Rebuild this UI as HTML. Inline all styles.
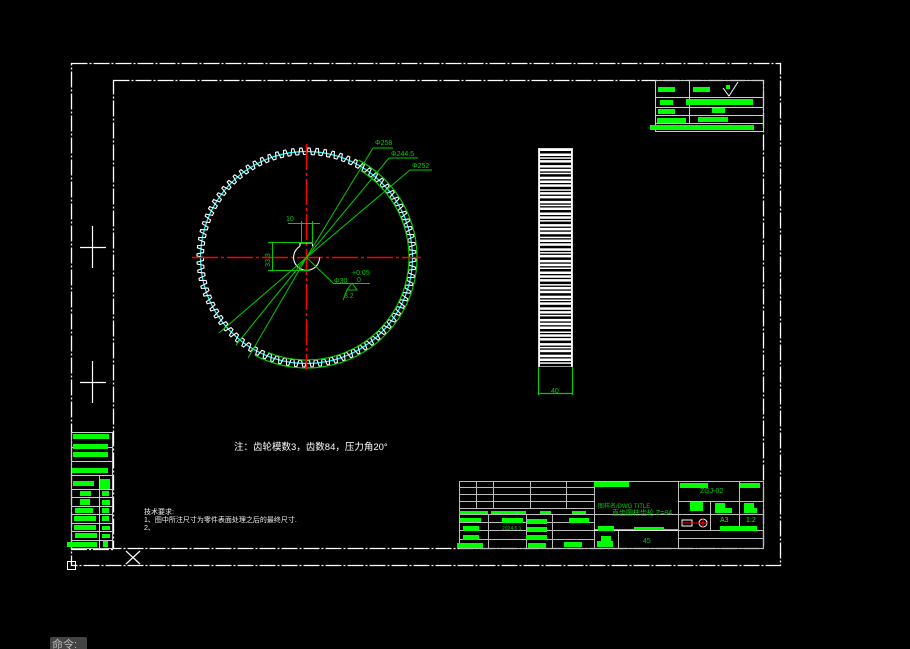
<!DOCTYPE html>
<html><head><meta charset="utf-8"><style>
html,body{margin:0;padding:0;background:#000;width:910px;height:649px;overflow:hidden}
svg{display:block}
text{font-family:"Liberation Sans","Noto Sans CJK SC",sans-serif}
</style></head><body>
<svg id="s" width="910" height="649" viewBox="0 0 910 649" xmlns="http://www.w3.org/2000/svg">
<g fill="none" stroke="#fff" stroke-width="1.3" stroke-dasharray="16 2 2 2">
<rect x="71.5" y="63.5" width="709" height="502"/>
<rect x="113.5" y="80.5" width="650" height="468"/>
<line x1="71" y1="549.5" x2="113" y2="549.5"/>
</g>
<g stroke="#fff" stroke-width="1.2">
<line x1="80" y1="247.5" x2="106" y2="247.5"/><line x1="92.5" y1="226" x2="92.5" y2="268"/>
<line x1="80" y1="382.5" x2="106" y2="382.5"/><line x1="92.5" y1="361" x2="92.5" y2="403"/>
<line x1="126" y1="551" x2="140" y2="564"/><line x1="140" y1="551" x2="126" y2="564"/>
</g>
<rect x="67.5" y="561.5" width="8" height="8" fill="none" stroke="#fff"/>
<g fill="none" stroke="#ccc" stroke-width="1">
<rect x="71.5" y="432.5" width="41" height="116"/>
<line x1="71" y1="447.5" x2="113" y2="447.5"/><line x1="71" y1="461.5" x2="113" y2="461.5"/><line x1="71" y1="475.5" x2="113" y2="475.5"/>
<line x1="99.5" y1="476" x2="99.5" y2="549"/>
<line x1="72" y1="489.5" x2="113" y2="489.5"/><line x1="72" y1="497.5" x2="113" y2="497.5"/><line x1="72" y1="506.5" x2="113" y2="506.5"/><line x1="72" y1="514.5" x2="113" y2="514.5"/><line x1="72" y1="523.5" x2="113" y2="523.5"/><line x1="72" y1="531.5" x2="113" y2="531.5"/><line x1="72" y1="540.5" x2="113" y2="540.5"/>
</g>
<g fill="#0f0">
<rect x="73" y="434" width="36" height="5"/><rect x="73" y="444" width="35" height="5"/><rect x="73" y="452" width="35" height="5"/><rect x="72" y="468" width="36" height="5"/>
<rect x="73" y="481" width="21" height="5"/><rect x="100" y="479" width="10" height="10"/>
<rect x="80" y="491" width="11" height="5"/><rect x="102" y="491" width="7" height="5"/>
<rect x="80" y="499" width="10" height="6"/><rect x="102" y="500" width="8" height="5"/>
<rect x="75" y="508" width="18" height="5"/><rect x="102" y="508" width="7" height="5"/>
<rect x="74" y="516" width="22" height="5"/><rect x="102" y="516" width="7" height="5"/>
<rect x="74" y="525" width="22" height="5"/><rect x="102" y="526" width="8" height="4"/>
<rect x="75" y="533" width="22" height="5"/><rect x="102" y="534" width="8" height="4"/>
<rect x="67" y="542" width="30" height="5"/><rect x="103" y="541" width="5" height="6"/>
</g>
<g fill="none" stroke="#ccc">
<rect x="655.5" y="80.5" width="108" height="51"/>
<line x1="655" y1="97.5" x2="764" y2="97.5"/><line x1="655" y1="107.5" x2="764" y2="107.5"/><line x1="655" y1="115.5" x2="764" y2="115.5"/><line x1="655" y1="123.5" x2="764" y2="123.5"/>
<line x1="689.5" y1="80" x2="689.5" y2="124"/>
</g>
<g fill="#0f0">
<rect x="658" y="87" width="17" height="5"/><rect x="693" y="87" width="17" height="5"/><rect x="726" y="85" width="4" height="4"/>
<rect x="660" y="100" width="13" height="5"/><rect x="686" y="99" width="67" height="6"/>
<rect x="658" y="109" width="17" height="5"/><rect x="712" y="108" width="13" height="5"/>
<rect x="657" y="118" width="29" height="5"/><rect x="698" y="117" width="30" height="5"/>
<rect x="650" y="125" width="104" height="5"/>
</g>
<path d="M723 88 L729 96 L738 82" fill="none" stroke="#fff" stroke-width="1"/>
<g fill="none" stroke="#bbb" stroke-width="1">
<rect x="459.5" y="481.5" width="304" height="67"/>
<line x1="459" y1="487.5" x2="594" y2="487.5"/><line x1="459" y1="494.5" x2="594" y2="494.5"/><line x1="459" y1="501.5" x2="594" y2="501.5"/><line x1="459" y1="508.5" x2="594" y2="508.5"/><line x1="459" y1="514.5" x2="764" y2="514.5"/>
<line x1="459" y1="522.5" x2="594" y2="522.5"/><line x1="459" y1="530.5" x2="764" y2="530.5"/><line x1="459" y1="539.5" x2="594" y2="539.5"/>
<line x1="476.5" y1="481" x2="476.5" y2="508"/><line x1="493.5" y1="481" x2="493.5" y2="508"/><line x1="530.5" y1="481" x2="530.5" y2="508"/><line x1="566.5" y1="481" x2="566.5" y2="508"/>
<line x1="488.5" y1="514" x2="488.5" y2="549"/><line x1="526.5" y1="514" x2="526.5" y2="549"/><line x1="552.5" y1="514" x2="552.5" y2="549"/>
<line x1="594.5" y1="481" x2="594.5" y2="549"/><line x1="678.5" y1="481" x2="678.5" y2="549"/><line x1="739.5" y1="481" x2="739.5" y2="514"/>
<line x1="678" y1="501.5" x2="764" y2="501.5"/><line x1="678" y1="538.5" x2="764" y2="538.5"/>
<line x1="710.5" y1="501" x2="710.5" y2="530"/><line x1="739.5" y1="514" x2="739.5" y2="530"/>
<line x1="618.5" y1="530" x2="618.5" y2="549"/>
</g>
<line x1="594" y1="530" x2="678" y2="530" stroke="#fff" stroke-width="1.3"/>
<g fill="#0f0">
<rect x="594" y="482" width="35" height="5"/><rect x="680" y="483" width="28" height="5"/><rect x="740" y="483" width="20" height="5"/>
<rect x="459" y="511" width="19" height="3"/><rect x="478" y="511" width="10" height="3"/><rect x="491" y="511" width="35" height="3"/><rect x="540" y="511" width="11" height="3"/><rect x="572" y="511" width="14" height="3"/>
<rect x="460" y="518" width="21" height="4"/><rect x="502" y="518" width="21" height="5"/><rect x="527" y="519" width="20" height="5"/><rect x="569" y="518" width="20" height="5"/>
<rect x="463" y="526" width="16" height="5"/><rect x="527" y="527" width="20" height="5"/>
<rect x="463" y="535" width="16" height="5"/><rect x="526" y="535" width="21" height="5"/>
<rect x="457" y="543" width="26" height="5"/><rect x="528" y="543" width="18" height="5"/><rect x="564" y="542" width="18" height="5"/>
<rect x="598" y="526" width="16" height="5"/><rect x="601" y="536" width="10" height="5"/><rect x="597" y="541" width="16" height="6"/>
<rect x="634" y="527" width="30" height="3"/>
<rect x="690" y="502" width="13" height="9"/><rect x="715" y="503" width="10" height="8"/><rect x="715" y="508" width="17" height="5"/><rect x="744" y="503" width="10" height="5"/><rect x="744" y="508" width="13" height="5"/>
<rect x="720" y="526" width="37" height="5"/>
</g>
<g font-size="6" fill="#0c0">
<text x="598" y="508">图样名/DWG TITLE</text>
<text x="612" y="515" font-size="7">直齿圆柱齿轮 Z=84</text>
<text x="700" y="493" font-size="7">ZGJ-02</text>
<text x="720" y="522" fill="#0f0" font-size="7">A3</text><text x="746" y="522" fill="#0f0" font-size="7">1:2</text>
<text x="643" y="543" font-size="7">45</text>
<text x="502" y="530" font-size="5">2024.5.1</text>
</g>
<rect x="682" y="520" width="10" height="6" fill="none" stroke="#fff"/><line x1="681" y1="523" x2="700" y2="523" stroke="red"/>
<circle cx="703" cy="523" r="4" fill="none" stroke="#fff"/><line x1="698" y1="523" x2="708" y2="523" stroke="red"/><line x1="703" y1="518" x2="703" y2="528" stroke="red"/>
<circle cx="306.5" cy="257.5" r="106" fill="none" stroke="#0ff" stroke-width="1.2"/>
<path id="gear" fill="none" stroke="#fff" stroke-width="1.1"/>
<path id="arc1" fill="none" stroke="#0c0" stroke-width="1.2"/>
<g stroke="#f00" stroke-width="1.5" stroke-dasharray="26 3 3 3">
<line x1="192" y1="257.5" x2="421" y2="257.5"/><line x1="306.5" y1="144" x2="306.5" y2="370"/>
</g>
<path d="M319.6 257.5 A13 13 0 1 1 300 246.2" fill="none" stroke="#fff" stroke-width="1.1"/>
<path d="M300 246.2 L300 243 L312.5 243 L312.5 246.2" fill="none" stroke="#fff" stroke-width="1.1"/>
<g stroke="#0c0" stroke-width="1" fill="none">
<line x1="306.5" y1="257.5" x2="373" y2="148"/><line x1="373" y1="148" x2="393" y2="148"/>
<line x1="306.5" y1="257.5" x2="389" y2="158"/><line x1="389" y1="158" x2="418" y2="158"/>
<line x1="306.5" y1="257.5" x2="410" y2="170"/><line x1="410" y1="170" x2="432" y2="170"/>
<line x1="306.5" y1="257.5" x2="219" y2="333"/><line x1="306.5" y1="257.5" x2="236" y2="345"/><line x1="306.5" y1="257.5" x2="248" y2="358"/>
<line x1="288" y1="223.5" x2="320" y2="223.5"/><line x1="301.5" y1="221" x2="301.5" y2="244"/><line x1="312.5" y1="221" x2="312.5" y2="244"/>
<line x1="268" y1="242.5" x2="310" y2="242.5"/><line x1="268" y1="270.5" x2="310" y2="270.5"/><line x1="272.5" y1="242" x2="272.5" y2="271"/>
<line x1="306.5" y1="257.5" x2="333" y2="283"/><line x1="333" y1="283.5" x2="370" y2="283.5"/>
<path d="M352 283 L347 290 L357 290 Z"/><line x1="347" y1="290" x2="343" y2="300"/>
</g>
<g font-size="7" fill="#0c0">
<text x="375" y="145">Φ258</text><text x="391" y="156">Φ244.5</text><text x="412" y="168">Φ252</text>
<text x="286" y="221">10</text>
<text x="270" y="260" transform="rotate(-90 270 260)" font-size="7" text-anchor="middle">33.3</text>
<text x="334" y="283">Φ30</text><text x="352" y="275">+0.05</text><text x="357" y="282">0</text>
<text x="344" y="298">3.2</text>
</g>
<rect x="538.5" y="148.5" width="34" height="218" fill="#fff" stroke="#ddd"/>
<g id="stripes" fill="#000"></g>
<g stroke="#0c0" stroke-width="1.2"><line x1="538.5" y1="367" x2="538.5" y2="395"/><line x1="572.5" y1="367" x2="572.5" y2="395"/><line x1="539" y1="393.5" x2="572" y2="393.5"/></g>
<text x="551" y="393" font-size="7" fill="#0c0">40</text>
<text x="234" y="450" font-size="9.5" fill="#fff">注：齿轮模数3，齿数84，压力角20°</text>
<g font-size="7" fill="#eee">
<text x="144" y="514">技术要求:</text>
<text x="144" y="522">1、图中所注尺寸为零件表面处理之后的最终尺寸.</text>
<text x="144" y="530">2、</text>
</g>
<rect x="50" y="637" width="37" height="14" rx="2" fill="#444"/>
<text x="52" y="648" font-size="11" fill="#bbb">命令:</text>
</svg>
<script>
var cx=306.5,cy=257.5,N=84,ro=109.5,rr=103,d="";
for(var i=0;i<N;i++){var a=i*2*Math.PI/N,s=2*Math.PI/N;
var pts=[[rr,a],[ro,a+s*0.18],[ro,a+s*0.45],[rr,a+s*0.63],[rr,a+s]];
pts.forEach(function(p,j){var x=cx+p[0]*Math.cos(p[1]),y=cy+p[0]*Math.sin(p[1]);d+=(i==0&&j==0?"M":"L")+x.toFixed(1)+" "+y.toFixed(1);});}
document.getElementById("gear").setAttribute("d",d+"Z");
function arc(r,a1,a2){a1*=Math.PI/180;a2*=Math.PI/180;return "M"+(cx+r*Math.cos(a1))+" "+(cy+r*Math.sin(a1))+" A"+r+" "+r+" 0 0 1 "+(cx+r*Math.cos(a2))+" "+(cy+r*Math.sin(a2));}
document.getElementById("arc1").setAttribute("d",arc(110.5,-62,118)+arc(102.5,-58,112));
var g=document.getElementById("stripes"),y=151,k=0;
while(y<364){var h=(k%3==0)?2.5:1.3;var r=document.createElementNS("http://www.w3.org/2000/svg","rect");
r.setAttribute("x",540);r.setAttribute("y",y);r.setAttribute("width",31);r.setAttribute("height",h);g.appendChild(r);y+=h+(k%4==1?1.5:2.5);k++;}
</script>
</body></html>
